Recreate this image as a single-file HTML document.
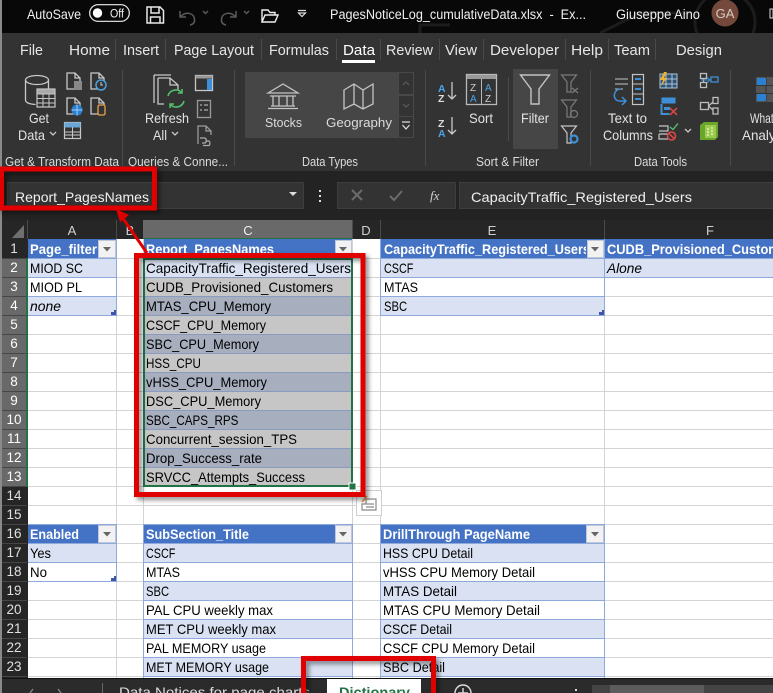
<!DOCTYPE html>
<html><head><meta charset="utf-8"><style>
html,body{margin:0;padding:0;background:#333;width:773px;height:693px;overflow:hidden}
body{position:relative}
svg{display:block}
text{font-family:"Liberation Sans",sans-serif;font-size:14px;fill:#000;white-space:pre}
.w{fill:#f0f0f0}.l{fill:#e6e6e6;font-size:14.5px}.r{fill:#e2e2e2;font-size:14px}.g{fill:#dcdcdc;font-size:12.5px}
.h{fill:#fff;font-weight:bold}.i{font-style:italic}.c{fill:#d0d0d0;font-size:13px;text-anchor:middle}
.n{fill:#e0e0e0;font-size:13.5px;text-anchor:middle}
.s{fill:none;stroke:#c8c8c8;stroke-width:1.3}.b{fill:none;stroke:#3f8fd8;stroke-width:1.5}
.x{position:absolute;font:14px/16px "Liberation Sans",sans-serif;color:#000;transform-origin:0 0;white-space:pre}
</style></head><body>
<svg xmlns="http://www.w3.org/2000/svg" width="773" height="693" viewBox="0 0 773 693">
<defs>
<filter id="sh" x="-10%" y="-10%" width="120%" height="120%"><feDropShadow dx="3" dy="3" stdDeviation="2.5" flood-color="#000" flood-opacity=".45"/></filter>
<clipPath id="ce"><rect x="381" y="239" width="205" height="20"/></clipPath>
</defs>
<!-- title bar -->
<rect width="773" height="33" fill="#080808"/>
<g fill="none" stroke="#1c1c1c" stroke-width="3"><circle cx="725" cy="22" r="30"/><path d="M600 33l40-20h50M420 33v-8h30"/></g>
<rect width="2" height="693" fill="#8a8a8a"/>
<text x="27" y="19" class="w" textLength="54" lengthAdjust="spacingAndGlyphs">AutoSave</text>
<rect x="89.700" y="4.700" width="39.600" height="16.600" rx="8.300" fill="none" stroke="#eee" stroke-width="1.200"/>
<circle cx="97.500" cy="13" r="4.700" fill="#fff"/>
<text x="110" y="17.500" class="w" style="font-size:11.500px" textLength="14" lengthAdjust="spacingAndGlyphs">Off</text>
<g fill="none" stroke="#e8e8e8" stroke-width="1.500"><path d="M147 7h13l3.500 3.500V23H147zM151 7v6h8V7M150.500 23v-6h9.500v6"/></g>
<g fill="none" stroke="#5a5a5a" stroke-width="1.500"><path d="M180 11v6h6M180.500 17c4-5.500 13-5 14 2 .6 4-2 5.500-4.500 6"/><path d="M203 11l2.500 2.500L208 11"/><path d="M236 11v6h-6M235.500 17c-4-5.500-13-5-14 2-.6 4 2 5.500 4.500 6"/><path d="M244 11l2.500 2.500L249 11"/></g>
<path d="M262 22V10h6l2 2.500h5V15M262 22l3-7h13l-3 7z" fill="none" stroke="#eee" stroke-width="1.400"/>
<path d="M298 10.500h8M298.500 13l3.500 3.500 3.500-3.500z" fill="none" stroke="#ddd" stroke-width="1.200"/>
<text x="330" y="19" class="w" style="font-size:13.500px" textLength="256" lengthAdjust="spacingAndGlyphs">PagesNoticeLog_cumulativeData.xlsx  -  Ex...</text>
<text x="616" y="19" class="w" style="font-size:13.500px" textLength="84" lengthAdjust="spacingAndGlyphs">Giuseppe Aino</text>
<circle cx="725" cy="13" r="13.500" fill="#74483a"/>
<text x="725" y="18" text-anchor="middle" style="font-size:13px;fill:#d8c8c0">GA</text>
<rect x="770" y="9" width="3" height="9" fill="none" stroke="#ddd"/>
<!-- ribbon -->
<rect x="2" y="33" width="771" height="138" fill="#333"/>
<g class="tabs">
<text x="20" y="55" class="l" textLength="23" lengthAdjust="spacingAndGlyphs">File</text>
<text x="69" y="55" class="l" textLength="41" lengthAdjust="spacingAndGlyphs">Home</text>
<text x="123" y="55" class="l" textLength="36" lengthAdjust="spacingAndGlyphs">Insert</text>
<text x="174" y="55" class="l" textLength="80" lengthAdjust="spacingAndGlyphs">Page Layout</text>
<text x="269" y="55" class="l" textLength="60" lengthAdjust="spacingAndGlyphs">Formulas</text>
<text x="343" y="55" class="l" style="fill:#fff" textLength="32" lengthAdjust="spacingAndGlyphs">Data</text>
<text x="386" y="55" class="l" textLength="47" lengthAdjust="spacingAndGlyphs">Review</text>
<text x="445" y="55" class="l" textLength="32" lengthAdjust="spacingAndGlyphs">View</text>
<text x="490" y="55" class="l" textLength="69" lengthAdjust="spacingAndGlyphs">Developer</text>
<text x="571" y="55" class="l" textLength="32" lengthAdjust="spacingAndGlyphs">Help</text>
<text x="614" y="55" class="l" textLength="36" lengthAdjust="spacingAndGlyphs">Team</text>
<text x="676" y="55" class="l" textLength="46" lengthAdjust="spacingAndGlyphs">Design</text>
</g>
<rect x="342" y="60" width="33" height="3" fill="#fff"/>
<g stroke="#4a4a4a"><path d="M115.500 39v21M165.500 39v21M261.500 39v21M336.500 39v21M380.500 39v21M439.500 39v21M483.500 39v21M565.500 39v21M608.500 39v21M655.500 39v21"/>
<path d="M122.500 70v96M234.500 70v96M425.500 70v96M508.500 77v64M590.500 70v96M730.500 70v96"/></g>
<!-- get data -->
<g class="s"><ellipse cx="37" cy="80" rx="11.500" ry="4.500"/><path d="M25.500 80v20c0 2.500 3 4 10 4.500M48.500 80v9"/></g>
<rect x="37" y="89" width="18" height="18" fill="#333" stroke="#c8c8c8" stroke-width="1.200"/>
<path d="M37 94h18M37 98.500h18M37 103h18M43 94v13M49 94v13" stroke="#c8c8c8"/>
<rect x="37.500" y="89.500" width="17" height="4" fill="#aaa"/>
<g class="s"><path d="M67 73h8l5 5v11H67zM75 73v5h5"/><path d="M91 73h8l5 5v11H91zM99 73v5h5"/><path d="M67 98h8l5 5v11H67zM75 98v5h5"/><path d="M91 98h8l5 5v11H91zM99 98v5h5"/></g>
<rect x="74" y="81" width="8" height="9" fill="#888"/>
<circle cx="101" cy="85" r="5" fill="#333" stroke="#4aa0e0" stroke-width="1.500"/><path d="M101 82v3h2" stroke="#ccc" fill="none"/>
<circle cx="77" cy="110" r="5.500" fill="#2a7fd0"/><path d="M71.500 110h11M77 104.500v11" stroke="#9cd0f5"/>
<rect x="98" y="105" width="7" height="10" rx="1.500" fill="#333" stroke="#e8a448" stroke-width="1.300"/>
<rect x="64.500" y="122.500" width="16" height="16" fill="#333" stroke="#c8c8c8" stroke-width="1.200"/><rect x="64.500" y="122.500" width="16" height="5" fill="#6aa5d8"/><path d="M64.500 132h16M64.500 135h16M72.500 127v11" stroke="#c8c8c8"/>
<text x="29" y="123" class="r" textLength="20" lengthAdjust="spacingAndGlyphs">Get</text>
<text x="18" y="140" class="r" textLength="27" lengthAdjust="spacingAndGlyphs">Data</text>
<path d="M50 132l3 3 3-3" class="s"/>
<text x="5" y="166" class="g" textLength="114" lengthAdjust="spacingAndGlyphs">Get &amp; Transform Data</text>
<!-- refresh -->
<g class="s"><path d="M154 75h17M154 75v28"/><path d="M158 78h12l8 7v5M158 78v26h6M170 78v7h8"/></g>
<g fill="none" stroke="#4fbf6a" stroke-width="1.600"><path d="M168 96a8 8 0 0 1 14-3M184 101a8 8 0 0 1-14 3"/><path d="M182 89v4h-4M170 108v-4h4"/></g>
<rect x="195.500" y="75.500" width="17" height="15" fill="#333" stroke="#c8c8c8" stroke-width="1.300"/><rect x="207" y="79" width="5" height="11" fill="#3f8fd8"/><rect x="195.500" y="75.500" width="17" height="3" fill="#999"/>
<rect x="197.500" y="100.500" width="13" height="17" fill="none" stroke="#9a9a9a" stroke-width="1.300"/><path d="M200 105h2M204 105h4M200 110h2M204 110h4" stroke="#aaa" stroke-width="1.300"/>
<path d="M198 144v-18h8l5 5v4M206 126v5h5" fill="none" stroke="#9a9a9a" stroke-width="1.300"/><path d="M200 138h5a3 3 0 0 1 0 5h-3M206 141h3a3 3 0 0 1 0 4.500h-6" fill="none" stroke="#aaa" stroke-width="1.300"/>
<text x="145" y="123" class="r" textLength="44" lengthAdjust="spacingAndGlyphs">Refresh</text>
<text x="153" y="140" class="r" textLength="14" lengthAdjust="spacingAndGlyphs">All</text>
<path d="M172 132l3 3 3-3" class="s"/>
<text x="128" y="166" class="g" textLength="100" lengthAdjust="spacingAndGlyphs">Queries &amp; Conne...</text>
<!-- data types -->
<rect x="245" y="72" width="153" height="66" fill="#464646"/>
<g fill="none" stroke="#c4c4c4" stroke-width="1.300"><path d="M268 93l15-9 15 9zM270 96h26M271 106h24M268 108.500h30M273 96v10M279 96v10M287 96v10M293 96v10"/><path d="M344 90l10-6 9 6 10-6v20l-10 5-9-5-10 5zM354 84v20M363 90v19"/></g>
<text x="265" y="127" class="r" style="font-size:13px;fill:#dcdcdc" textLength="37" lengthAdjust="spacingAndGlyphs">Stocks</text>
<text x="326" y="127" class="r" style="font-size:13px;fill:#dcdcdc" textLength="66" lengthAdjust="spacingAndGlyphs">Geography</text>
<g fill="#333" stroke="#484848"><rect x="398.500" y="72.500" width="15" height="22"/><rect x="398.500" y="95.500" width="15" height="21"/><rect x="398.500" y="116.500" width="15" height="21"/></g>
<path d="M403 85l3-3 3 3M403 104l3 3 3-3" fill="none" stroke="#5c5c5c" stroke-width="1.200"/><path d="M402 122h8M402.500 125l3.500 4 3.500-4" fill="none" stroke="#ddd" stroke-width="1.200"/>
<text x="302" y="166" class="g" textLength="56" lengthAdjust="spacingAndGlyphs">Data Types</text>
<!-- sort -->
<text x="438" y="92" style="font-size:10.500px;fill:#4aa3e8;font-weight:bold">A</text><text x="438" y="102" style="font-size:10.500px;fill:#ddd;font-weight:bold">Z</text>
<text x="438" y="127" style="font-size:10.500px;fill:#ddd;font-weight:bold">Z</text><text x="438" y="137" style="font-size:10.500px;fill:#4aa3e8;font-weight:bold">A</text>
<path d="M452 82v17M448 95l4 4 4-4M452 117v17M448 130l4 4 4-4" class="s"/>
<rect x="466.500" y="74.500" width="30" height="30" fill="none" stroke="#b8b8b8" stroke-width="1.300"/><rect x="467" y="75" width="29" height="4" fill="#999"/><path d="M481.500 79v25" stroke="#b8b8b8"/>
<text x="470" y="91" style="font-size:10px;fill:#ccc">Z</text><text x="470" y="102" style="font-size:10px;fill:#4aa3e8">A</text><text x="485" y="91" style="font-size:10px;fill:#4aa3e8">A</text><text x="485" y="102" style="font-size:10px;fill:#ccc">Z</text>
<text x="469" y="123" class="r" textLength="24" lengthAdjust="spacingAndGlyphs">Sort</text>
<rect x="513" y="69" width="45" height="80" fill="#464646"/>
<path d="M520.500 75h29l-10.500 14v15h-8V89z" fill="none" stroke="#c4c4c4" stroke-width="1.400"/>
<text x="521" y="123" class="r" textLength="28" lengthAdjust="spacingAndGlyphs">Filter</text>
<g fill="none" stroke="#7a7a7a" stroke-width="1.200"><path d="M561.500 75h15l-5.500 7v10h-4V82zM572 88l6 5M578 88l-6 5"/><path d="M561.500 100h15l-5.500 7v10h-4v-10z"/><circle cx="574" cy="114" r="3.500"/></g>
<path d="M561.500 126h15l-5.500 7v10h-4v-10z" fill="none" stroke="#c4c4c4" stroke-width="1.200"/><circle cx="574" cy="139" r="3.500" fill="none" stroke="#3f8fd8" stroke-width="2.200"/>
<text x="476" y="166" class="g" textLength="63" lengthAdjust="spacingAndGlyphs">Sort &amp; Filter</text>
<!-- data tools -->
<path d="M615 79h13M615 84h13M615 89h8" stroke="#c4c4c4"/>
<path d="M621 89c-8 0-9 11-2 12h7M622 97l4 4-4 4" class="b"/>
<rect x="632.500" y="74.500" width="11" height="30" fill="none" stroke="#c4c4c4" stroke-width="1.200"/>
<path d="M635 79h6M635 89h6M635 99h6" stroke="#3f8fd8" stroke-width="2"/><path d="M633 84h10M633 94h10" stroke="#c4c4c4"/>
<text x="608" y="123" class="r" textLength="39" lengthAdjust="spacingAndGlyphs">Text to</text>
<text x="603" y="140" class="r" textLength="50" lengthAdjust="spacingAndGlyphs">Columns</text>
<rect x="660" y="74" width="17" height="14" fill="#35536f" stroke="#a8c6e0"/><path d="M660 79h17M660 84h17M666 74v14M672 74v14" stroke="#a8c6e0"/>
<path d="M664 72l-4 8h3l-2 6 6-8h-3l3-6z" fill="#f0b429"/>
<rect x="661.500" y="97.500" width="14" height="6" fill="#3f8fd8"/><path d="M661.500 104v10h8" fill="none" stroke="#3f8fd8" stroke-width="2"/><rect x="664" y="107" width="6" height="3" fill="#3f8fd8"/>
<path d="M670 108l7 7M677 108l-7 7" stroke="#e04848" stroke-width="1.500"/>
<path d="M659 126h9v5h-9M659 134h9M659 134v5h9" fill="none" stroke="#c4c4c4" stroke-width="1.200"/>
<path d="M670 127l3 2.500 5-6" fill="none" stroke="#58b868" stroke-width="1.400"/>
<circle cx="671.500" cy="136" r="4" fill="none" stroke="#e04848" stroke-width="1.600"/><path d="M669 133.500l5 5" stroke="#e04848" stroke-width="1.500"/>
<path d="M685 129l3 3 3-3" class="s"/>
<g fill="none" stroke="#bdbdbd" stroke-width="1.300"><rect x="700.500" y="73.500" width="6" height="5"/><rect x="700.500" y="82.500" width="6" height="5"/><path d="M703.500 78.500v4"/><rect x="700.500" y="102.500" width="8" height="7"/><rect x="713" y="97.500" width="5" height="6"/><rect x="713" y="108" width="5" height="6"/><path d="M708.500 106l4.500-4M708.500 106l4.500 4"/></g>
<rect x="711" y="77" width="7" height="5" fill="none" stroke="#3f8fd8" stroke-width="1.300"/><path d="M701 80h9M707 77l3 3-3 3" fill="none" stroke="#3f8fd8"/>
<path d="M700 125l4-3h14v15l-3 3h-15z" fill="#6aa52c"/><rect x="705" y="125" width="11" height="13" fill="#9ccc4e"/><path d="M708 128v8M712 127v9" stroke="#fff" stroke-dasharray="2 1"/>
<text x="634" y="166" class="g" textLength="53" lengthAdjust="spacingAndGlyphs">Data Tools</text>
<!-- what-if -->
<rect x="756" y="77" width="17" height="25" fill="#555"/><path d="M756 85.500h17M756 93.500h17M766 77v25" stroke="#333"/><rect x="757" y="78" width="9" height="7" fill="#2a80d2"/><rect x="757" y="94" width="9" height="7" fill="#2a80d2"/>
<text x="750" y="123" class="r" textLength="27" lengthAdjust="spacingAndGlyphs">What-</text>
<text x="742" y="140" class="r" textLength="50" lengthAdjust="spacingAndGlyphs">Analysis</text>
<!-- formula bar -->
<rect x="2" y="171" width="771" height="49" fill="#232323"/>
<rect x="7.500" y="182.500" width="296" height="26" fill="#333" stroke="#3e3e3e"/>
<text x="15" y="202" class="w" textLength="134" lengthAdjust="spacingAndGlyphs">Report_PagesNames</text>
<path d="M289 192h8l-4 4z" fill="#ddd"/>
<rect x="319" y="190" width="2" height="2" fill="#ddd"/><rect x="319" y="195" width="2" height="2" fill="#ddd"/><rect x="319" y="200" width="2" height="2" fill="#ddd"/>
<rect x="337.500" y="182.500" width="118" height="26" fill="#333" stroke="#3e3e3e"/>
<path d="M352 190l10 10M362 190l-10 10M390 196l4 4 8-9" fill="none" stroke="#6b6b6b" stroke-width="2"/>
<text x="430" y="200" style="font-family:'Liberation Serif',serif;font-size:13px;fill:#d0d0d0;font-style:italic">fx</text>
<rect x="459.500" y="182.500" width="314" height="26" fill="#333" stroke="#3e3e3e"/>
<text x="471" y="202" class="w" textLength="221" lengthAdjust="spacingAndGlyphs">CapacityTraffic_Registered_Users</text>
<!-- headers -->
<rect x="2" y="220" width="771" height="19" fill="#262626"/>
<rect x="143" y="220" width="210" height="18" fill="#696969"/>
<rect x="2" y="239" width="26" height="440" fill="#262626"/>
<rect x="2" y="258" width="25" height="229" fill="#696969"/>
<path d="M24 225v13H12z" fill="#6f6f6f"/>
<g stroke="#4a4a4a"><path d="M27.500 220v19M116.500 220v19M352.500 220v19M380.500 220v19M604.500 220v19"/></g>
<g stroke="#464646"><path d="M2 258.500h25M2 277.500h25M2 296.500h25M2 315.500h25M2 334.500h25M2 353.500h25M2 372.500h25M2 391.500h25M2 410.500h25M2 429.500h25M2 448.500h25M2 467.500h25M2 486.500h25M2 505.500h25M2 524.500h25M2 543.500h25M2 562.500h25M2 581.500h25M2 600.500h25M2 619.500h25M2 638.500h25M2 657.500h25M2 676.500h25"/></g>
<text x="72" y="235" class="c">A</text><text x="130" y="235" class="c">B</text><text x="248" y="235" class="c" style="fill:#eee">C</text><text x="366" y="235" class="c">D</text><text x="492" y="235" class="c">E</text><text x="710" y="235" class="c">F</text>
<!-- sheet -->
<rect x="28" y="239" width="745" height="440" fill="#fff"/>
<g stroke="#d4d4d4"><path d="M28 258.500h745M28 277.500h745M28 296.500h745M28 315.500h745M28 334.500h745M28 353.500h745M28 372.500h745M28 391.500h745M28 410.500h745M28 429.500h745M28 448.500h745M28 467.500h745M28 486.500h745M28 505.500h745M28 524.500h745M28 543.500h745M28 562.500h745M28 581.500h745M28 600.500h745M28 619.500h745M28 638.500h745M28 657.500h745M28 676.500h745"/><path d="M116.500 239v440M143.500 239v440M352.500 239v440M380.500 239v440M604.500 239v440"/></g>
<!-- top tables fill -->
<g fill="#4472c4"><rect x="28" y="239" width="88" height="19"/><rect x="144" y="239" width="208" height="19"/><rect x="381" y="239" width="223" height="19"/><rect x="605" y="239" width="168" height="19"/>
<rect x="28" y="524" width="88" height="19"/><rect x="144" y="524" width="208" height="19"/><rect x="381" y="524" width="223" height="19"/></g>
<g fill="#d9e1f2"><rect x="28" y="258" width="88" height="19"/><rect x="28" y="296" width="88" height="19"/><rect x="381" y="258" width="223" height="19"/><rect x="381" y="296" width="223" height="19"/><rect x="605" y="258" width="168" height="19"/>
<rect x="28" y="543" width="88" height="19"/><rect x="144" y="543" width="208" height="19"/><rect x="144" y="581" width="208" height="19"/><rect x="144" y="619" width="208" height="19"/><rect x="144" y="657" width="208" height="19"/>
<rect x="381" y="543" width="223" height="19"/><rect x="381" y="581" width="223" height="19"/><rect x="381" y="619" width="223" height="19"/><rect x="381" y="657" width="223" height="19"/>
<rect x="144" y="258" width="208" height="19"/></g>
<g fill="#c6c6c6"><rect x="144" y="277" width="208" height="19"/><rect x="144" y="315" width="208" height="19"/><rect x="144" y="353" width="208" height="19"/><rect x="144" y="391" width="208" height="19"/><rect x="144" y="429" width="208" height="19"/><rect x="144" y="467" width="208" height="19"/></g>
<g fill="#a7aebd"><rect x="144" y="296" width="208" height="19"/><rect x="144" y="334" width="208" height="19"/><rect x="144" y="372" width="208" height="19"/><rect x="144" y="410" width="208" height="19"/><rect x="144" y="448" width="208" height="19"/></g>
<g stroke="#8ea9db" fill="none"><path d="M28 258.500h88M28 277.500h88M28 296.500h88M28 315.500h88M116.500 239v77"/>
<path d="M381 258.500h223M381 277.500h223M381 296.500h223M381 315.500h223M380.500 239v77M604.500 239v77"/>
<path d="M605 258.500h168M605 277.500h168"/>
<path d="M28 524.500h88M28 543.500h88M28 562.500h88M28 581.500h88M116.500 524v58"/>
<path d="M144 524.500h209M144 543.500h209M144 562.500h209M144 581.500h209M144 600.500h209M144 619.500h209M144 638.500h209M144 657.500h209M144 676.500h209M143.500 524v155M352.500 524v155"/>
<path d="M381 524.500h224M381 543.500h224M381 562.500h224M381 581.500h224M381 600.500h224M381 619.500h224M381 638.500h224M381 657.500h224M381 676.500h224M380.500 524v155M604.500 524v155"/></g>
<g stroke="#8a9bc0" fill="none"><path d="M144 277.500h208M144 296.500h208M144 315.500h208M144 334.500h208M144 353.500h208M144 372.500h208M144 391.500h208M144 410.500h208M144 429.500h208M144 448.500h208M144 467.500h208"/></g>
<path d="M116 315v-5h-2v2h-3v3z" fill="#3f55a8"/><path d="M604 315v-5h-2v2h-3v3z" fill="#3f55a8"/><path d="M116 581v-5h-2v2h-3v3z" fill="#3f55a8"/>
<!-- selection -->
<path d="M143 238.500h210" stroke="#217346"/>
<path d="M27 258v229" stroke="#217346" stroke-width="2"/>
<rect x="144" y="259" width="208" height="227" fill="none" stroke="#217346" stroke-width="2"/>
<rect x="349" y="483" width="7" height="7" fill="#217346" stroke="#fff"/>
<!-- row numbers -->
<g class="rows">
<text x="14" y="253" class="n">1</text><text x="14" y="272" class="n" style="fill:#fff">2</text><text x="14" y="291" class="n" style="fill:#fff">3</text><text x="14" y="310" class="n" style="fill:#fff">4</text><text x="14" y="329" class="n" style="fill:#fff">5</text><text x="14" y="348" class="n" style="fill:#fff">6</text><text x="14" y="367" class="n" style="fill:#fff">7</text><text x="14" y="386" class="n" style="fill:#fff">8</text><text x="14" y="405" class="n" style="fill:#fff">9</text><text x="14" y="424" class="n" style="fill:#fff">10</text><text x="14" y="443" class="n" style="fill:#fff">11</text><text x="14" y="462" class="n" style="fill:#fff">12</text><text x="14" y="481" class="n" style="fill:#fff">13</text><text x="14" y="500" class="n">14</text><text x="14" y="519" class="n">15</text><text x="14" y="538" class="n">16</text><text x="14" y="557" class="n">17</text><text x="14" y="576" class="n">18</text><text x="14" y="595" class="n">19</text><text x="14" y="614" class="n">20</text><text x="14" y="633" class="n">21</text><text x="14" y="652" class="n">22</text><text x="14" y="671" class="n">23</text>
</g>
<!-- headers text -->
<text x="30" y="254" class="h" textLength="67" lengthAdjust="spacingAndGlyphs">Page_filter</text>
<text x="146" y="254" class="h" textLength="128" lengthAdjust="spacingAndGlyphs">Report_PagesNames</text>
<g clip-path="url(#ce)"><text x="384" y="254" class="h" textLength="206" lengthAdjust="spacingAndGlyphs">CapacityTraffic_Registered_Users</text></g>
<text x="607" y="254" class="h" textLength="192" lengthAdjust="spacingAndGlyphs">CUDB_Provisioned_Customers</text>
<text x="30" y="539" class="h" textLength="49" lengthAdjust="spacingAndGlyphs">Enabled</text>
<text x="146" y="539" class="h" textLength="103" lengthAdjust="spacingAndGlyphs">SubSection_Title</text>
<text x="383" y="539" class="h" textLength="147" lengthAdjust="spacingAndGlyphs">DrillThrough PageName</text>
<!-- dropdowns -->
<g fill="#f2f2f2" stroke="#c0c8d8"><rect x="98.500" y="240.500" width="17" height="17"/><rect x="335.500" y="240.500" width="16" height="17"/><rect x="587.500" y="240.500" width="16" height="17"/><rect x="98.500" y="525.500" width="17" height="17"/><rect x="335.500" y="525.500" width="16" height="17"/><rect x="586.500" y="525.500" width="17" height="17"/></g>
<g fill="#666"><path d="M103 247h8l-4 4.500z"/><path d="M339 247h8l-4 4.500z"/><path d="M591 247h8l-4 4.500z"/><path d="M103 532h8l-4 4.500z"/><path d="M339 532h8l-4 4.500z"/><path d="M591 532h8l-4 4.500z"/></g>
<!-- cells A -->
<text x="30" y="273" textLength="53" lengthAdjust="spacingAndGlyphs">MIOD SC</text>
<text x="30" y="292" textLength="52" lengthAdjust="spacingAndGlyphs">MIOD PL</text>
<text x="30" y="311" class="i" textLength="31" lengthAdjust="spacingAndGlyphs">none</text>
<text x="30" y="558" textLength="21" lengthAdjust="spacingAndGlyphs">Yes</text>
<text x="30" y="577" textLength="17" lengthAdjust="spacingAndGlyphs">No</text>
<!-- cells C -->
<text x="146" y="273" textLength="205" lengthAdjust="spacingAndGlyphs">CapacityTraffic_Registered_Users</text>
<text x="146" y="292" textLength="187" lengthAdjust="spacingAndGlyphs">CUDB_Provisioned_Customers</text>
<text x="146" y="311" textLength="125" lengthAdjust="spacingAndGlyphs">MTAS_CPU_Memory</text>
<text x="146" y="330" textLength="120" lengthAdjust="spacingAndGlyphs">CSCF_CPU_Memory</text>
<text x="146" y="349" textLength="113" lengthAdjust="spacingAndGlyphs">SBC_CPU_Memory</text>
<text x="146" y="387" textLength="121" lengthAdjust="spacingAndGlyphs">vHSS_CPU_Memory</text>
<text x="146" y="406" textLength="115" lengthAdjust="spacingAndGlyphs">DSC_CPU_Memory</text>
<text x="146" y="444" textLength="151" lengthAdjust="spacingAndGlyphs">Concurrent_session_TPS</text>
<text x="146" y="463" textLength="116" lengthAdjust="spacingAndGlyphs">Drop_Success_rate</text>
<text x="146" y="482" textLength="159" lengthAdjust="spacingAndGlyphs">SRVCC_Attempts_Success</text>
<text x="146" y="577" textLength="34" lengthAdjust="spacingAndGlyphs">MTAS</text>
<text x="146" y="615" textLength="127" lengthAdjust="spacingAndGlyphs">PAL CPU weekly max</text>
<text x="146" y="634" textLength="130" lengthAdjust="spacingAndGlyphs">MET CPU weekly max</text>
<text x="146" y="653" textLength="120" lengthAdjust="spacingAndGlyphs">PAL MEMORY usage</text>
<text x="146" y="672" textLength="123" lengthAdjust="spacingAndGlyphs">MET MEMORY usage</text>
<!-- cells E/F -->
<text x="384" y="292" textLength="34" lengthAdjust="spacingAndGlyphs">MTAS</text>
<text x="607" y="273" class="i" textLength="35" lengthAdjust="spacingAndGlyphs">Alone</text>
<text x="383" y="558" textLength="90" lengthAdjust="spacingAndGlyphs">HSS CPU Detail</text>
<text x="383" y="577" textLength="152" lengthAdjust="spacingAndGlyphs">vHSS CPU Memory Detail</text>
<text x="383" y="596" textLength="74" lengthAdjust="spacingAndGlyphs">MTAS Detail</text>
<text x="383" y="615" textLength="157" lengthAdjust="spacingAndGlyphs">MTAS CPU Memory Detail</text>
<text x="383" y="634" textLength="69" lengthAdjust="spacingAndGlyphs">CSCF Detail</text>
<text x="383" y="653" textLength="152" lengthAdjust="spacingAndGlyphs">CSCF CPU Memory Detail</text>
<text x="383" y="672" textLength="62" lengthAdjust="spacingAndGlyphs">SBC Detail</text>
<!-- paste options -->
<rect x="356.500" y="490.500" width="25" height="25" fill="#fff" stroke="#cfcfcf"/>
<path d="M366 499h10v11h-14v-6h4zM364 504h10M366 507h8" fill="none" stroke="#8a8a8a" stroke-width="1.200"/><path d="M362 502l5-6" stroke="#e8a060" stroke-width="2"/>
<!-- tab bar -->
<rect x="2" y="679" width="771" height="14" fill="#2b2b2b"/>
<path d="M2 678.500h771" stroke="#111"/>
<path d="M33 689l-3 4M58 689l3 4" stroke="#888" stroke-width="1.300"/>
<path d="M102.500 683v10" stroke="#666"/>
<text x="119" y="697" class="w" style="font-size:14px;fill:#ddd" textLength="191" lengthAdjust="spacingAndGlyphs">Data Notices for page charts</text>
<rect x="327" y="679" width="94" height="14" fill="#fff"/>
<text x="339" y="697" style="font-size:14px;fill:#217346;font-weight:bold" textLength="71" lengthAdjust="spacingAndGlyphs">Dictionary</text>
<circle cx="463" cy="693" r="8" fill="none" stroke="#ddd" stroke-width="1.400"/><path d="M463 688v5M458 693h10" stroke="#ddd" stroke-width="1.400"/>
<rect x="575" y="689" width="2" height="2" fill="#ddd"/>
<rect x="592" y="685" width="181" height="8" fill="#444"/><rect x="610" y="685" width="94" height="8" fill="#5c5c5c"/>
<!-- annotations -->
<g filter="url(#sh)" fill="none" stroke="#e00000">
<rect x="1.500" y="169" width="153" height="39" stroke-width="5"/>
<rect x="136.500" y="255.500" width="226.500" height="239" stroke-width="5"/>
<path d="M303.500 693V658.500H433.500V693" stroke-width="5"/>
</g>
<path d="M147 253L122 217" stroke="#e00000" stroke-width="3" fill="none"/>
<path d="M116 209l13 6-9 7z" fill="#e00000"/>
</svg>
<div class="x" style="left:146px;top:355px;transform:scaleX(.83)">HSS_CPU</div>
<div class="x" style="left:146px;top:412px;transform:scaleX(.83)">SBC_CAPS_RPS</div>
<div class="x" style="left:146px;top:545px;transform:scaleX(.77)">CSCF</div>
<div class="x" style="left:146px;top:583px;transform:scaleX(.8)">SBC</div>
<div class="x" style="left:384px;top:260px;transform:scaleX(.77)">CSCF</div>
<div class="x" style="left:384px;top:298px;transform:scaleX(.8)">SBC</div>
</body></html>
